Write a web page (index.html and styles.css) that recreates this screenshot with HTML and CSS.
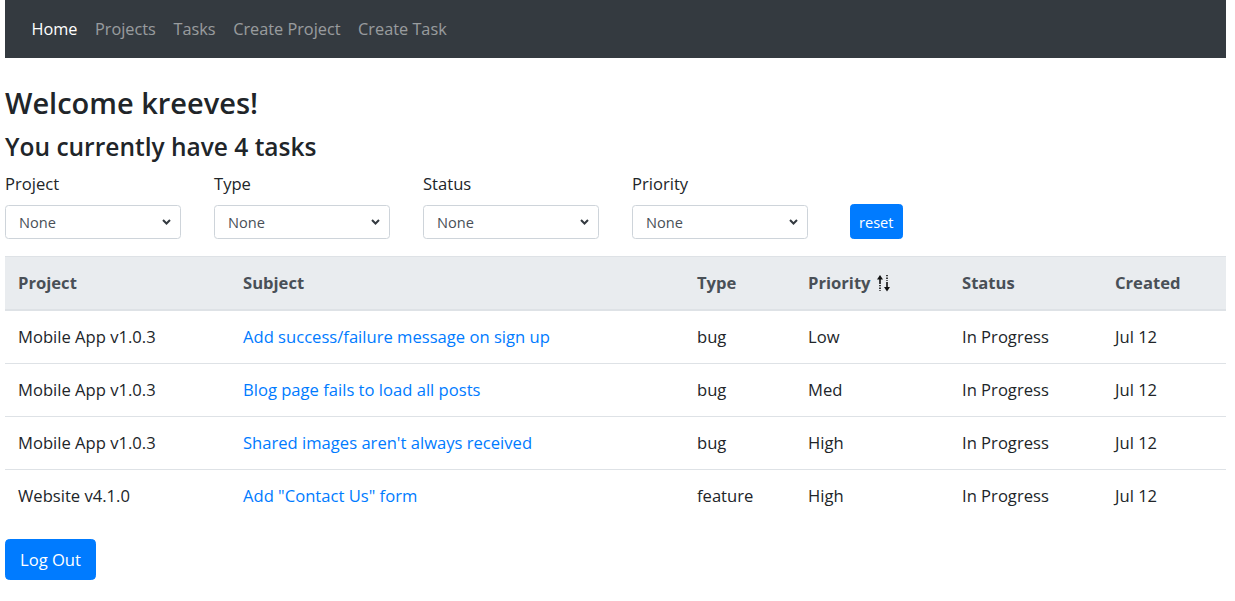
FILE: index.html
```html
<!DOCTYPE html>
<html lang="en">
<head>
<meta charset="utf-8">
<title>Tasks</title>
<link rel="stylesheet" href="styles.css">
</head>
<body>
<div class="page">
  <nav class="navbar">
    <a class="nav-link active" href="#">Home</a>
    <a class="nav-link" href="#">Projects</a>
    <a class="nav-link" href="#">Tasks</a>
    <a class="nav-link" href="#">Create Project</a>
    <a class="nav-link" href="#">Create Task</a>
  </nav>

  <h2 class="welcome">Welcome kreeves!</h2>
  <h4 class="count">You currently have 4 tasks</h4>

  <div class="filters">
    <div class="filter">
      <label class="filter-label">Project</label>
      <select class="filter-select"><option>None</option></select>
    </div>
    <div class="filter">
      <label class="filter-label">Type</label>
      <select class="filter-select"><option>None</option></select>
    </div>
    <div class="filter">
      <label class="filter-label">Status</label>
      <select class="filter-select"><option>None</option></select>
    </div>
    <div class="filter">
      <label class="filter-label">Priority</label>
      <select class="filter-select"><option>None</option></select>
    </div>
    <button class="btn-reset" type="button">reset</button>
  </div>

  <table class="tasks">
    <colgroup>
      <col class="c-project"><col class="c-subject"><col class="c-type"><col class="c-priority"><col class="c-status"><col class="c-created">
    </colgroup>
    <thead>
      <tr>
        <th>Project</th>
        <th>Subject</th>
        <th>Type</th>
        <th>Priority <svg class="sort-icon" width="16" height="18" viewBox="0 0 16 18"><g fill="none" stroke="#111" stroke-width="1.6"><path d="M4 3v7"/><path d="M4 11v6" stroke-dasharray="1.3 1.3"/><path d="M11 1v6" stroke-dasharray="1.3 1.3"/><path d="M11 8v7"/></g><path d="M4 1L1 5.5h6z" fill="#111"/><path d="M11 17.5L8 13h6z" fill="#111"/></svg></th>
        <th>Status</th>
        <th>Created</th>
      </tr>
    </thead>
    <tbody>
      <tr>
        <td>Mobile App v1.0.3</td>
        <td><a class="link" href="#">Add success/failure message on sign up</a></td>
        <td>bug</td>
        <td>Low</td>
        <td>In Progress</td>
        <td>Jul 12</td>
      </tr>
      <tr>
        <td>Mobile App v1.0.3</td>
        <td><a class="link" href="#">Blog page fails to load all posts</a></td>
        <td>bug</td>
        <td>Med</td>
        <td>In Progress</td>
        <td>Jul 12</td>
      </tr>
      <tr>
        <td>Mobile App v1.0.3</td>
        <td><a class="link" href="#">Shared images aren't always received</a></td>
        <td>bug</td>
        <td>High</td>
        <td>In Progress</td>
        <td>Jul 12</td>
      </tr>
      <tr>
        <td>Website v4.1.0</td>
        <td><a class="link" href="#">Add "Contact Us" form</a></td>
        <td>feature</td>
        <td>High</td>
        <td>In Progress</td>
        <td>Jul 12</td>
      </tr>
    </tbody>
  </table>

  <button class="btn-logout" type="button">Log Out</button>
</div>
</body>
</html>
```

FILE: styles.css
```css
* { box-sizing: border-box; }

html, body {
  margin: 0;
  padding: 0;
  background: #fff;
}

body {
  font-family: "Open Sans", "Noto Sans", "Liberation Sans", sans-serif;
  font-size: 16.6px;
  line-height: 26.4px;
  color: #212529;
}

.page {
  padding: 0 9px 0 5px;
}

.navbar {
  display: flex;
  align-items: center;
  height: 58px;
  padding: 0 17.6px;
  background: #343a40;
}

.nav-link {
  padding: 0 8.8px;
  color: rgba(255, 255, 255, 0.5);
  text-decoration: none;
  font-size: 16.3px;
}

.nav-link.active {
  color: #fff;
}

.welcome {
  margin: 26px 0 10px;
  font-size: 29px;
  line-height: 38px;
  font-weight: 600;
}

.count {
  margin: 0 0 9px;
  font-size: 24.5px;
  line-height: 30px;
  font-weight: 600;
}

.filters {
  display: flex;
  align-items: flex-end;
  gap: 33px;
  margin-bottom: 17px;
}

.filter {
  display: flex;
  flex-direction: column;
  width: 176px;
}

.filter-label {
  margin-bottom: 8px;
  line-height: 26.4px;
}

.filter-select {
  appearance: none;
  -webkit-appearance: none;
  width: 176px;
  height: 34px;
  padding: 0 28px 0 13px;
  font-family: inherit;
  font-size: 14.6px;
  color: #495057;
  background: #fff url("data:image/svg+xml,%3Csvg xmlns='http://www.w3.org/2000/svg' width='9' height='6' viewBox='0 0 9 6'%3E%3Cpath d='M1 1l3.5 3.5L8 1' fill='none' stroke='%23343a40' stroke-width='2'/%3E%3C/svg%3E") no-repeat right 9px center;
  border: 1px solid #ced4da;
  border-radius: 3.5px;
}

.btn-reset {
  margin-left: 9px;
  height: 35px;
  padding: 0 8px;
  font-family: inherit;
  font-size: 14.6px;
  color: #fff;
  background: #007bff;
  border: 1px solid #007bff;
  border-radius: 3.5px;
}

.tasks {
  width: 100%;
  border-collapse: collapse;
  table-layout: fixed;
  margin-bottom: 17px;
}

.c-project { width: 225px; }
.c-subject { width: 454px; }
.c-type { width: 111px; }
.c-priority { width: 154px; }
.c-status { width: 153px; }
.c-created { width: 124px; }

.tasks th {
  text-align: left;
  font-weight: 700;
  color: #495057;
  background: #e9ecef;
  padding: 13px;
  line-height: 26px;
  border-top: 1px solid #dee2e6;
  border-bottom: 2px solid #dee2e6;
  white-space: nowrap;
}

.sort-icon {
  vertical-align: -3px;
  margin-left: 1px;
}

.tasks td {
  padding: 13px;
  line-height: 26px;
  border-top: 1px solid #dee2e6;
  white-space: nowrap;
}

.tasks thead + tbody tr:first-child td {
  border-top: none;
}

.link {
  color: #007bff;
  text-decoration: none;
}

.btn-logout {
  height: 41px;
  padding: 0 14px;
  font-family: inherit;
  font-size: 16.6px;
  color: #fff;
  background: #007bff;
  border: 1px solid #007bff;
  border-radius: 4.4px;
}
```
